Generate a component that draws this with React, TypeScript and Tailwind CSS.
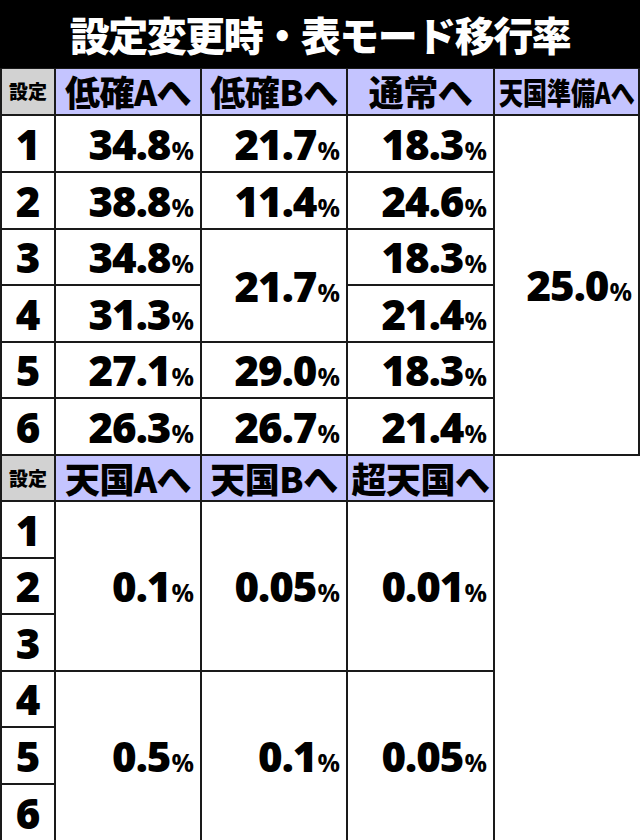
import React from 'react';

const jp = { fontFamily: '"Noto Sans CJK JP", "Noto Sans", sans-serif' };
const num = { fontFamily: '"Open Sans", "Noto Sans", sans-serif' };

const Pct = ({ v }: { v: string }) => (
  <div className="flex h-full items-center justify-end bg-white pr-[6px] text-black" style={num}>
    <span className="leading-none">
      <span className="text-[42px] font-extrabold tracking-[-1px]">{v}</span>
      <span className="ml-[1px] text-[25px] font-bold">%</span>
    </span>
  </div>
);

const Side = ({ n }: { n: string }) => (
  <div className="flex h-full items-center justify-center bg-white text-[42px] font-extrabold leading-none text-black" style={num}>
    {n}
  </div>
);

const Head = ({ label, small }: { label: string; small?: boolean }) => (
  <div className="flex h-full items-center justify-center bg-[#c4c4ff] text-black" style={jp}>
    {small ? (
      <span className="inline-block whitespace-nowrap text-[30px] font-black leading-normal scale-x-[0.8]">{label}</span>
    ) : (
      <span className="whitespace-nowrap text-[35px] font-black leading-normal tracking-[-0.5px]">{label}</span>
    )}
  </div>
);

const SetteiHead = () => (
  <div className="flex h-full items-center justify-center bg-[#d2d2d2] text-[19px] font-black leading-normal text-black" style={jp}>
    設定
  </div>
);

export default function App() {
  return (
    <div className="h-[840px] w-[640px] overflow-hidden bg-white">
      <div className="flex h-[68px] items-center justify-center bg-black">
        <h1 className="whitespace-nowrap text-[40px] font-black leading-normal tracking-[-1.5px] text-white" style={jp}>
          設定変更時・表モード移行率
        </h1>
      </div>

      {/* upper table */}
      <div className="grid grid-cols-[52px_144px_144px_145px_143px] grid-rows-[45px_55px_55px_54px_55px_54px_55px] gap-[2px] bg-[#1a1a1a] px-[2px] pb-[2px] pt-[1px]">
        <SetteiHead />
        <Head label="低確Aへ" />
        <Head label="低確Bへ" />
        <Head label="通常へ" />
        <Head label="天国準備Aへ" small />

        <Side n="1" />
        <Pct v="34.8" />
        <Pct v="21.7" />
        <Pct v="18.3" />
        <div className="row-span-6">
          <Pct v="25.0" />
        </div>

        <Side n="2" />
        <Pct v="38.8" />
        <Pct v="11.4" />
        <Pct v="24.6" />

        <Side n="3" />
        <Pct v="34.8" />
        <div className="row-span-2">
          <Pct v="21.7" />
        </div>
        <Pct v="18.3" />

        <Side n="4" />
        <Pct v="31.3" />
        <Pct v="21.4" />

        <Side n="5" />
        <Pct v="27.1" />
        <Pct v="29.0" />
        <Pct v="18.3" />

        <Side n="6" />
        <Pct v="26.3" />
        <Pct v="26.7" />
        <Pct v="21.4" />
      </div>

      {/* lower table */}
      <div className="grid w-fit grid-cols-[52px_144px_144px_145px] grid-rows-[44px_55px_54px_55px_54px_55px_55px] gap-[2px] bg-[#1a1a1a] px-[2px] pb-[2px]">
        <SetteiHead />
        <Head label="天国Aへ" />
        <Head label="天国Bへ" />
        <Head label="超天国へ" />

        <Side n="1" />
        <div className="row-span-3">
          <Pct v="0.1" />
        </div>
        <div className="row-span-3">
          <Pct v="0.05" />
        </div>
        <div className="row-span-3">
          <Pct v="0.01" />
        </div>
        <Side n="2" />
        <Side n="3" />

        <Side n="4" />
        <div className="row-span-3">
          <Pct v="0.5" />
        </div>
        <div className="row-span-3">
          <Pct v="0.1" />
        </div>
        <div className="row-span-3">
          <Pct v="0.05" />
        </div>
        <Side n="5" />
        <Side n="6" />
      </div>
    </div>
  );
}
